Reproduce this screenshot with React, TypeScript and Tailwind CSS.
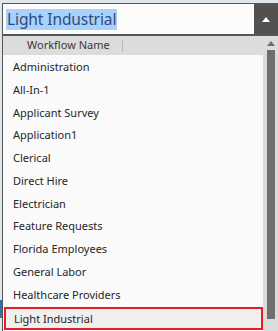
const items = [
  "Administration",
  "All-In-1",
  "Applicant Survey",
  "Application1",
  "Clerical",
  "Direct Hire",
  "Electrician",
  "Feature Requests",
  "Florida Employees",
  "General Labor",
  "Healthcare Providers",
];

const font = { fontFamily: '"Noto Sans", "Open Sans", sans-serif' };

export default function App() {
  return (
    <div className="flex h-[331px] w-[278px] flex-col overflow-hidden bg-[#dfe7ec]" style={font}>
      <div className="h-[3px] shrink-0" />
      <div className="flex min-h-0 flex-1">
        {/* page behind the dropdown */}
        <div className="flex w-[2px] shrink-0 flex-col">
          <div className="h-[297px]" />
          <div className="h-[18px] bg-[#2f72a8]" />
        </div>

        <div className="flex min-w-0 flex-1 flex-col border-l border-t border-[#555555]">
          {/* combo input */}
          <div className="flex h-[30px] shrink-0">
            <div className="flex flex-1 items-center bg-[#fcfcfc] pl-[3px]">
              <span className="bg-[#a9d1fb] px-[1px] text-[15.5px] leading-[21px] tracking-[-0.1px] text-[#2a4f7d]">Light Industrial</span>
            </div>
            <div className="flex w-[24px] items-center justify-center bg-[#515151]">
              <svg width="8" height="5" viewBox="0 0 8 5">
                <path d="M0 5 L4 0 L8 5 Z" fill="#ffffff" />
              </svg>
            </div>
          </div>
          <div className="h-[2px] shrink-0 bg-[#555555]" />

          {/* dropdown */}
          <div className="flex min-h-0 flex-1">
            <div className="flex min-w-0 flex-1 flex-col">
              <div className="flex h-[19px] shrink-0 items-center bg-[#dcdcdc]">
                <span className="w-[119px] pl-[24px] text-[11px] text-[#3f3631]">Workflow Name</span>
                <div className="h-[12px] w-px bg-[#b9b9b9]" />
              </div>
              <div className="flex flex-1 flex-col bg-[#fafafa] pt-[1px]">
                {items.map((name) => (
                  <div key={name} className="flex h-[22.75px] items-center pl-[10px] text-[11px] text-[#262626]">
                    {name}
                  </div>
                ))}
                <div className="ml-px mt-[1px] flex h-[23px] items-center border-2 border-[#e81c24] bg-[#f0f0f0] pl-[8px] text-[11px] text-[#262626]">
                  Light Industrial
                </div>
              </div>
            </div>

            {/* scrollbar */}
            <div className="flex w-[15px] shrink-0 flex-col items-center bg-[#dadcdd] pt-[5px]">
              <svg width="8" height="5" viewBox="0 0 8 5">
                <path d="M0 5 L4 0 L8 5 Z" fill="#6e6e6e" />
              </svg>
              <div className="mt-[4px] h-[269px] w-[8px] bg-[#6e6e6e]" />
            </div>
          </div>
        </div>
      </div>
    </div>
  );
}
